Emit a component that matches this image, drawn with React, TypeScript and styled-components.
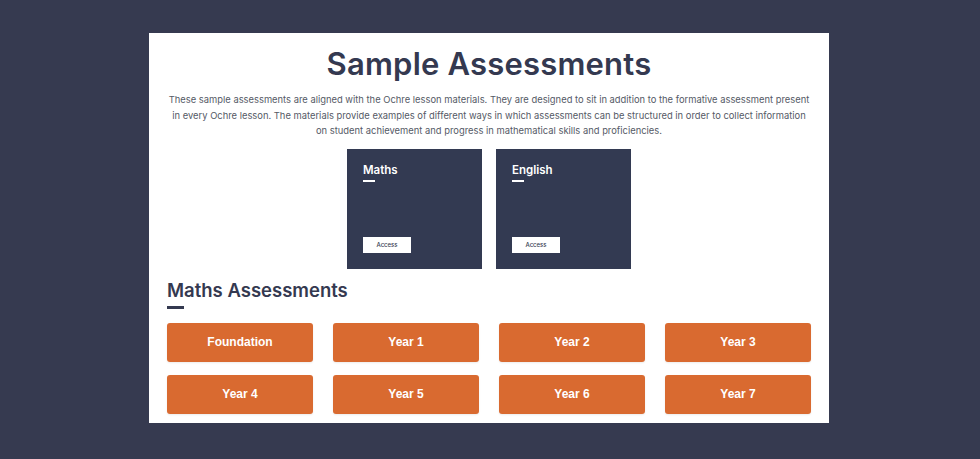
import React from 'react'
import styled, { createGlobalStyle } from 'styled-components'

const GlobalStyle = createGlobalStyle`
  html, body {
    margin: 0;
    padding: 0;
    background: #363a50;
  }
  body {
    font-family: Inter, "Noto Sans", sans-serif;
  }
`

const subjects = ['Maths', 'English']
const years = ['Foundation', 'Year 1', 'Year 2', 'Year 3', 'Year 4', 'Year 5', 'Year 6', 'Year 7']

export default function App(): React.JSX.Element {
  return (
    <>
      <GlobalStyle />
      <Page>
        <Panel>
          <Title>Sample Assessments</Title>
          <Intro>
            These sample assessments are aligned with the Ochre lesson materials. They are designed to sit in
            addition to the formative assessment present in every Ochre lesson. The materials provide examples of
            different ways in which assessments can be structured in order to collect information on student
            achievement and progress in mathematical skills and proficiencies.
          </Intro>

          <CardRow>
            {subjects.map((s) => (
              <SubjectCard key={s}>
                <CardTitle>{s}</CardTitle>
                <CardRule />
                <AccessButton>Access</AccessButton>
              </SubjectCard>
            ))}
          </CardRow>

          <SectionHeading>Maths Assessments</SectionHeading>
          <SectionRule />

          <YearGrid>
            {years.map((y) => (
              <YearButton key={y}>{y}</YearButton>
            ))}
          </YearGrid>
        </Panel>
      </Page>
    </>
  )
}

const Page = styled.div`
  width: 980px;
  height: 459px;
  padding-top: 33px;
  box-sizing: border-box;
  overflow: hidden;
`

const Panel = styled.div`
  width: 680px;
  margin-left: 149px;
  background: #ffffff;
  padding: 13px 18px 9px;
  box-sizing: border-box;
  display: flex;
  flex-direction: column;
`

const Title = styled.h1`
  margin: 0;
  text-align: center;
  font-family: Inter, "Noto Sans", sans-serif;
  font-size: 31px;
  font-weight: 600;
  line-height: 36px;
  letter-spacing: 0.2px;
  color: #343950;
`

const Intro = styled.p`
  margin: 10px auto 0;
  max-width: 642px;
  text-align: center;
  font-family: Inter, "Noto Sans", sans-serif;
  font-size: 9.4px;
  line-height: 15.6px;
  color: #555a66;
`

const CardRow = styled.div`
  display: flex;
  justify-content: center;
  gap: 14px;
  margin-top: 10px;
`

const SubjectCard = styled.div`
  width: 135px;
  height: 120px;
  background: #333a52;
  padding: 15px 16px 16px;
  box-sizing: border-box;
  display: flex;
  flex-direction: column;
  align-items: flex-start;
`

const CardTitle = styled.div`
  font-family: Inter, "Noto Sans", sans-serif;
  font-size: 11.5px;
  font-weight: 600;
  line-height: 13px;
  color: #ffffff;
`

const CardRule = styled.div`
  width: 12px;
  height: 2px;
  margin-top: 3px;
  background: #ffffff;
`

const AccessButton = styled.div`
  margin-top: auto;
  width: 48px;
  height: 16px;
  background: #ffffff;
  display: flex;
  align-items: center;
  justify-content: center;
  font-family: Inter, "Noto Sans", sans-serif;
  font-size: 6px;
  font-weight: 500;
  color: #343950;
`

const SectionHeading = styled.h2`
  margin: 10px 0 0;
  font-family: Inter, "Noto Sans", sans-serif;
  font-size: 18.5px;
  font-weight: 600;
  line-height: 22px;
  color: #343950;
`

const SectionRule = styled.div`
  width: 17px;
  height: 3px;
  margin-top: 5px;
  background: #343950;
`

const YearGrid = styled.div`
  display: grid;
  grid-template-columns: repeat(4, 146px);
  column-gap: 20px;
  row-gap: 13px;
  margin-top: 14px;
`

const YearButton = styled.div`
  height: 39px;
  border-radius: 3px;
  background: #d96a30;
  display: flex;
  align-items: center;
  justify-content: center;
  font-family: "Liberation Sans", Arial, sans-serif;
  font-size: 12px;
  font-weight: 700;
  color: #ffffff;
  box-shadow: 0 1px 2px rgba(0, 0, 0, 0.08);
`
